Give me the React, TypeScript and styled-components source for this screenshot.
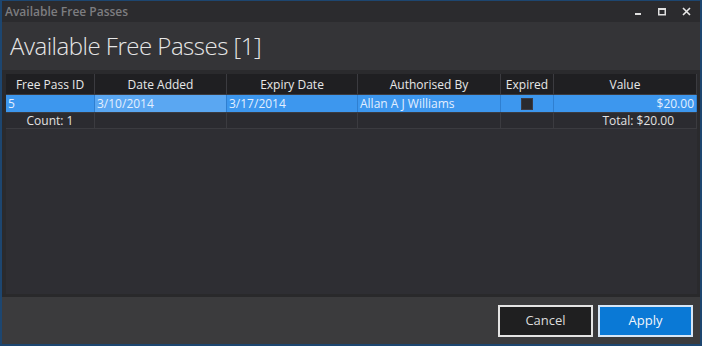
import React from 'react';
import styled, { createGlobalStyle } from 'styled-components';

const Global = createGlobalStyle`
  html, body {
    margin: 0;
    padding: 0;
    background: #1d4670;
  }
  body {
    font-family: 'Segoe UI', 'Open Sans', 'Noto Sans', sans-serif;
  }
`;

type PassRow = {
  id: string;
  added: string;
  expiry: string;
  by: string;
  expired: boolean;
  value: string;
};

const rows: PassRow[] = [
  { id: '5', added: '3/10/2014', expiry: '3/17/2014', by: 'Allan A J Williams', expired: false, value: '$20.00' },
];

const columns = [
  { key: 'id', label: 'Free Pass ID', width: 89 },
  { key: 'added', label: 'Date Added', width: 132 },
  { key: 'expiry', label: 'Expiry Date', width: 131 },
  { key: 'by', label: 'Authorised By', width: 143 },
  { key: 'expired', label: 'Expired', width: 53 },
  { key: 'value', label: 'Value', width: 143 },
];

const template = columns.map(c => `${c.width}px`).join(' ');

// Window

const Window = styled.div`
  width: 702px;
  height: 346px;
  box-sizing: border-box;
  border: 2px solid #1d4670;
  border-top-width: 1px;
  display: flex;
  flex-direction: column;
  background: #2d2d31;
  overflow: hidden;
`;

const TitleBar = styled.div`
  height: 21px;
  display: flex;
  align-items: center;
  justify-content: space-between;
  background: #2b2b2e;
  padding-left: 3px;
`;

const TitleText = styled.span`
  color: #7d7d80;
  font-size: 12px;
  font-weight: 600;
`;

const WinButtons = styled.div`
  display: flex;
  height: 100%;
  padding-right: 2px;
`;

const WinButton = styled.div`
  width: 24px;
  height: 100%;
  display: flex;
  align-items: center;
  justify-content: center;
`;

const Header = styled.div`
  height: 48px;
  background: #343437;
  display: flex;
  align-items: center;
  padding-left: 8px;
`;

const Heading = styled.h1`
  margin: 0 0 1px;
  font-family: 'Open Sans', sans-serif;
  font-size: 24px;
  font-weight: 300;
  letter-spacing: -0.5px;
  color: #e6e6e6;
`;

// Grid

const Body = styled.div`
  flex: 1;
  display: flex;
  padding: 4px 3px 0 4px;
  background: #2a2a2d;
`;

const Grid = styled.div`
  flex: 1;
  background: #2e2e33;
`;

const Row = styled.div<{ $bg: string; $h: number }>`
  display: grid;
  grid-template-columns: ${template};
  height: ${p => p.$h}px;
  background: ${p => p.$bg};
  border-bottom: 1px solid #3b3b40;
`;

const HeadCell = styled.div`
  color: #e8e8e8;
  font-size: 12px;
  display: flex;
  align-items: center;
  justify-content: center;
  border-right: 1px solid #3b3b40;
`;

const Cell = styled.div<{ $align?: string; $bg?: string; $line: string; $color: string; $pad?: number }>`
  color: ${p => p.$color};
  font-size: 12px;
  display: flex;
  align-items: center;
  justify-content: ${p => p.$align || 'flex-start'};
  padding: 0 ${p => p.$pad ?? 2}px 0 2px;
  border-right: 1px solid ${p => p.$line};
  background: ${p => p.$bg || 'transparent'};
  white-space: nowrap;
  overflow: hidden;
`;

const Check = styled.span`
  width: 12px;
  height: 12px;
  box-sizing: border-box;
  background: #2a2a2e;
  border: 1px solid #3a3a44;
`;

// Footer

const Footer = styled.div`
  height: 47px;
  background: #3b3b3d;
  border-top: 3px solid #29292b;
  display: flex;
  align-items: center;
  justify-content: flex-end;
  gap: 5px;
  padding-right: 7px;
`;

const Button = styled.button<{ $primary?: boolean }>`
  width: 95px;
  height: 32px;
  box-sizing: border-box;
  border: 2px solid ${p => (p.$primary ? '#d6e6f6' : '#e4e4e4')};
  background: ${p => (p.$primary ? '#0a79d6' : '#1f1f20')};
  color: ${p => (p.$primary ? '#f2f6fb' : '#dcdcdc')};
  font-family: inherit;
  font-size: 13px;
  padding: 0 0 1px;
`;

const App: React.FC = () => (
  <>
    <Global />
    <Window>
      <TitleBar>
        <TitleText>Available Free Passes</TitleText>
        <WinButtons>
          <WinButton>
            <svg width="8" height="8" viewBox="0 0 8 8">
              <rect x="1" y="5" width="6" height="2" fill="#e0e0e0" />
            </svg>
          </WinButton>
          <WinButton>
            <svg width="8" height="8" viewBox="0 0 8 8">
              <rect x="0.75" y="0.75" width="6.5" height="6" fill="none" stroke="#e0e0e0" strokeWidth="1.5" />
              <rect x="0" y="0" width="8" height="2" fill="#e0e0e0" />
            </svg>
          </WinButton>
          <WinButton>
            <svg width="9" height="9" viewBox="0 0 9 9">
              <path d="M1 1 L8 8 M8 1 L1 8" stroke="#e8e8e8" strokeWidth="1.6" />
            </svg>
          </WinButton>
        </WinButtons>
      </TitleBar>
      <Header>
        <Heading>Available Free Passes [{rows.length}]</Heading>
      </Header>
      <Body>
        <Grid>
          <Row $bg="#1f1f22" $h={20}>
            {columns.map(c => (
              <HeadCell key={c.key}>{c.label}</HeadCell>
            ))}
          </Row>
          {rows.map(r => (
            <Row key={r.id} $bg="#3d97ee" $h={17}>
              <Cell $line="#2f7fd0" $color="#e3efff">{r.id}</Cell>
              <Cell $line="#2f7fd0" $color="#e3efff" $bg="#5aa7f2">{r.added}</Cell>
              <Cell $line="#2f7fd0" $color="#e3efff">{r.expiry}</Cell>
              <Cell $line="#2f7fd0" $color="#e3efff">{r.by}</Cell>
              <Cell $line="#2f7fd0" $color="#e3efff" $align="center">
                <Check />
              </Cell>
              <Cell $line="#2f7fd0" $color="#e3efff" $align="flex-end">{r.value}</Cell>
            </Row>
          ))}
          <Row $bg="#2b2b30" $h={15}>
            <Cell $line="#3b3b40" $color="#e2e2e2" $align="center">Count: {rows.length}</Cell>
            <Cell $line="#3b3b40" $color="#e2e2e2" />
            <Cell $line="#3b3b40" $color="#e2e2e2" />
            <Cell $line="#3b3b40" $color="#e2e2e2" />
            <Cell $line="#3b3b40" $color="#e2e2e2" />
            <Cell $line="#3b3b40" $color="#e2e2e2" $align="flex-end" $pad={22}>Total: $20.00</Cell>
          </Row>
        </Grid>
      </Body>
      <Footer>
        <Button>Cancel</Button>
        <Button $primary>Apply</Button>
      </Footer>
    </Window>
  </>
);

export default App;
